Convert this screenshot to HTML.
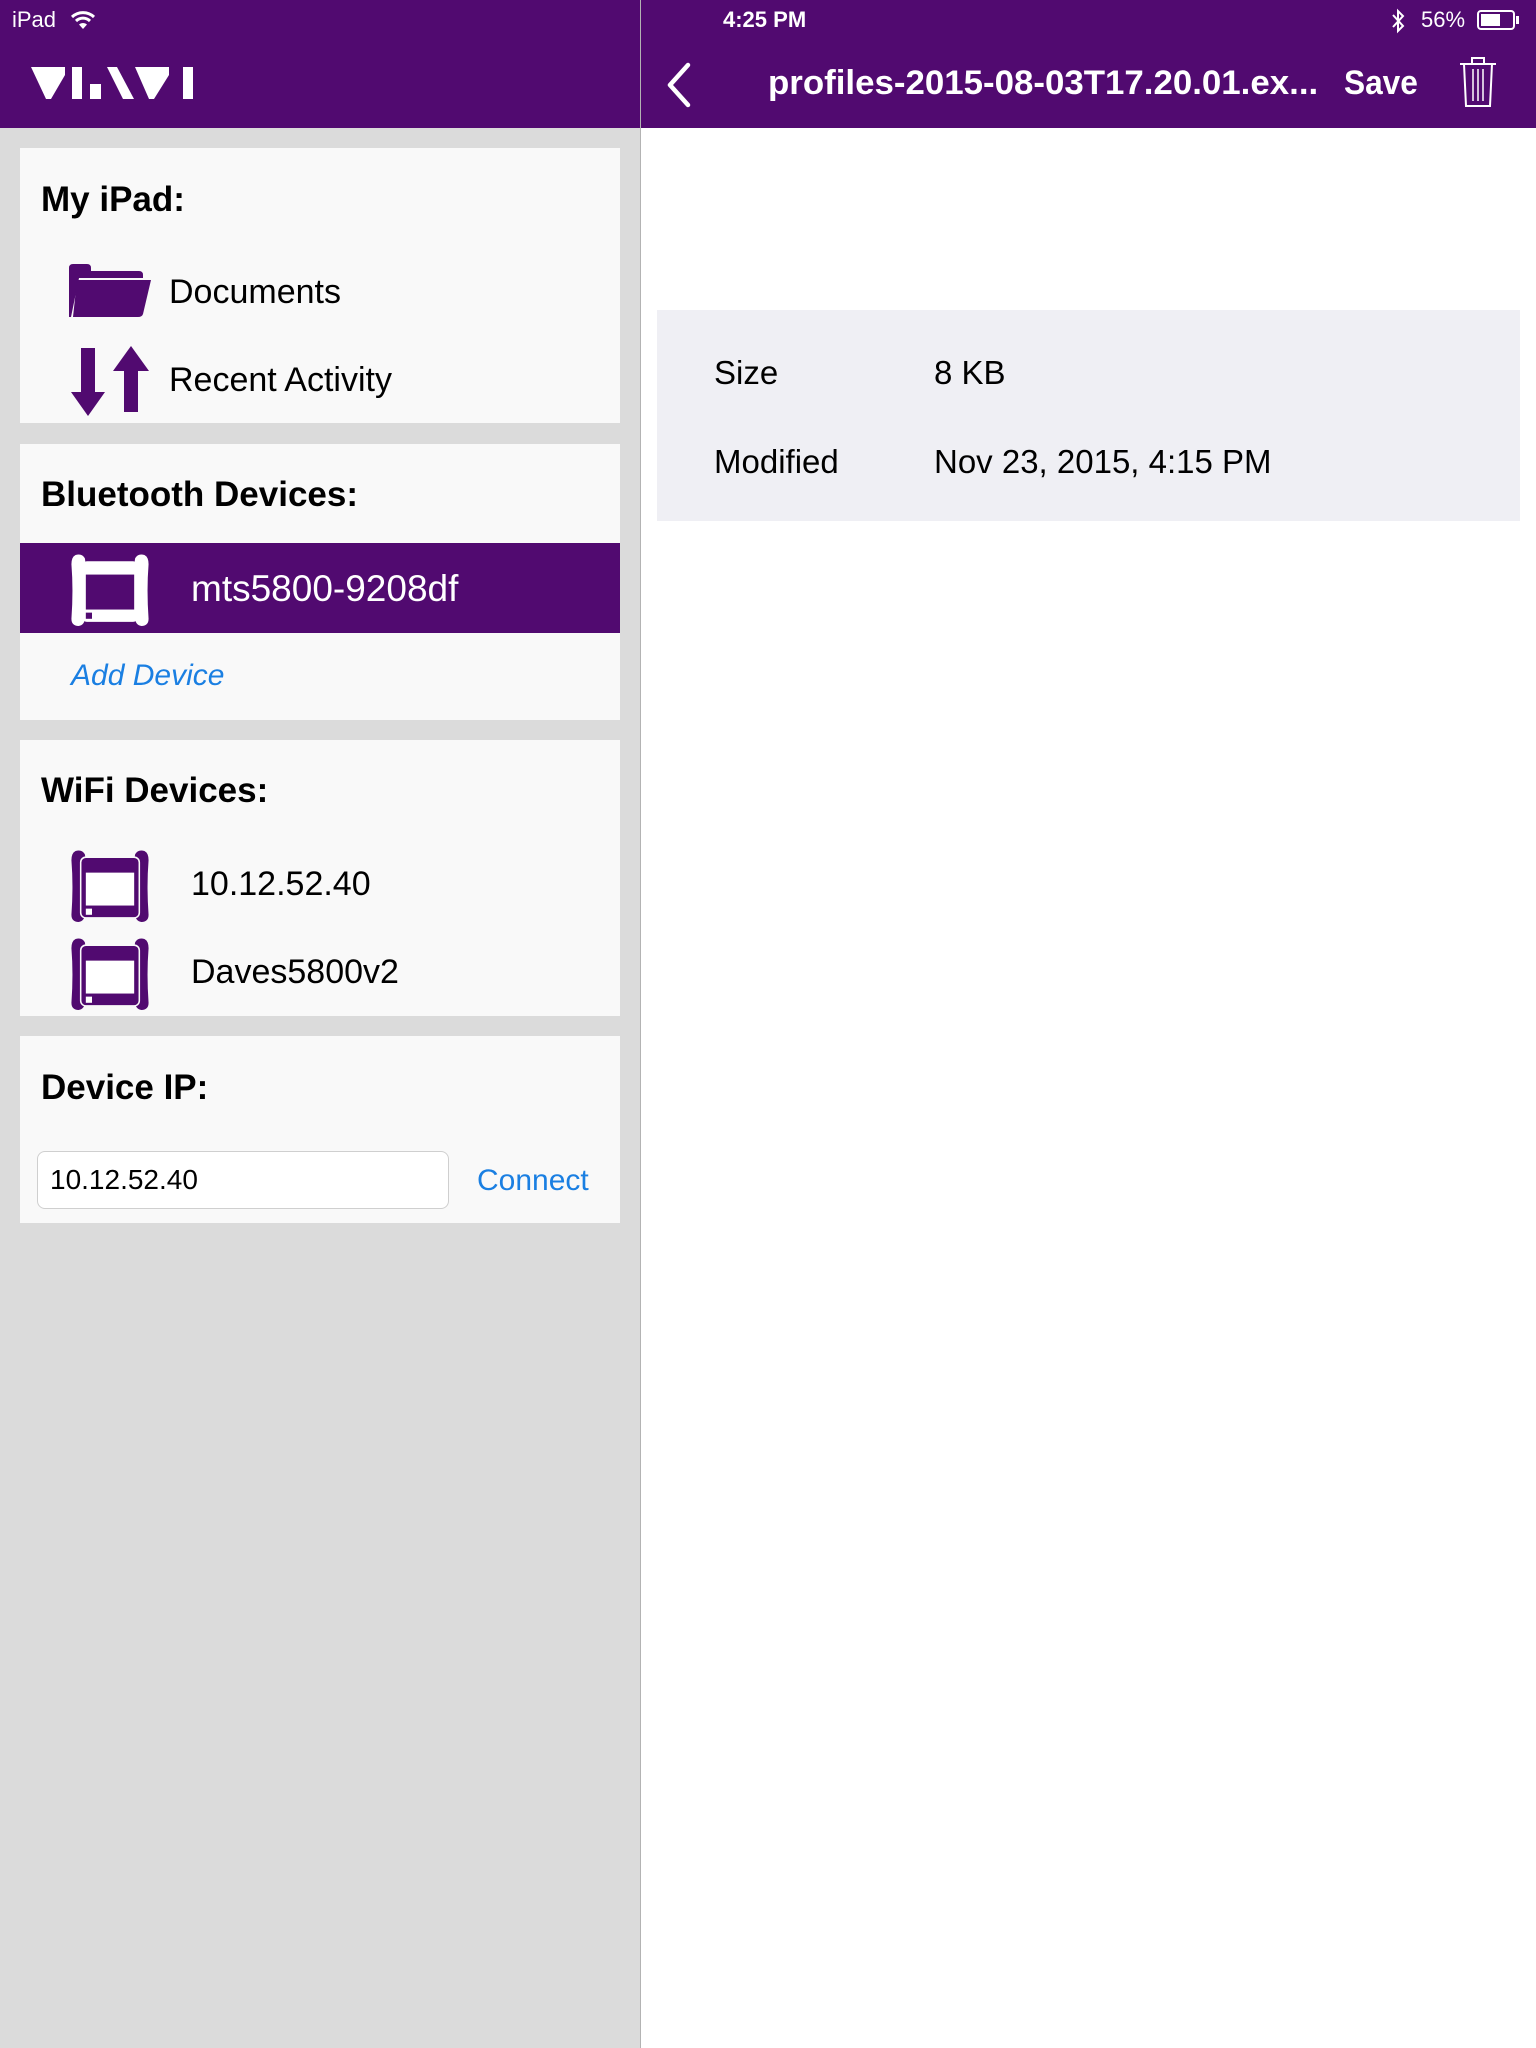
<!DOCTYPE html>
<html><head><meta charset="utf-8"><style>
*{margin:0;padding:0;box-sizing:border-box}
body{width:1536px;height:2048px;position:relative;overflow:hidden;font-family:"Liberation Sans",sans-serif;background:#fff}
.abs{position:absolute}
.t{position:absolute;white-space:nowrap;line-height:1}
#left{left:0;top:0;width:640px;height:2048px;background:#dbdbdb}
#divider{left:640px;top:0;width:1px;height:2048px;background:#b3b3b3}
.hdr{top:0;height:128px;background:#510a70}
.card{position:absolute;left:20px;width:600px;background:#f9f9f9}
.h{font-weight:bold;font-size:35px;color:#000}
.r{font-size:34px;color:#000}
.blue{color:#1a7fe2}
</style></head><body>
<div id="left" class="abs"></div>
<div class="abs hdr" style="left:0;width:640px"></div>
<div class="abs hdr" style="left:641px;width:895px"></div>
<div id="divider" class="abs"></div>

<div class="t" style="left:12px;top:9px;font-size:22px;color:#fff">iPad</div>
<svg class="abs" style="left:70px;top:9px" width="26" height="22" viewBox="0 0 26 22"><path d="M2 8 A16 16 0 0 1 24 8" stroke="#fff" stroke-width="3" fill="none"/><path d="M6 12 A10 10 0 0 1 20 12" stroke="#fff" stroke-width="3" fill="none"/><path d="M13 20 L9 15.5 A6 6 0 0 1 17 15.5 Z" fill="#fff"/></svg>
<div class="t" style="left:723px;top:9px;font-size:22px;color:#fff;font-weight:bold">4:25 PM</div>
<svg class="abs" style="left:1390px;top:7px" width="16" height="28" viewBox="0 0 16 28"><path d="M3 8 L13 19 L8 24 L8 4 L13 9 L3 20" stroke="#fff" stroke-width="2" fill="none"/></svg>
<div class="t" style="left:1421px;top:9px;font-size:22px;color:#fff">56%</div>
<div class="abs" style="left:1477px;top:10px;width:38px;height:20px;border:2px solid #fff;border-radius:4px"><div style="margin:2px;width:19px;height:12px;background:#fff"></div></div>
<div class="abs" style="left:1516px;top:16px;width:3px;height:8px;background:#fff"></div>

<svg class="abs" style="left:0;top:0" width="220" height="110" viewBox="0 0 220 110" fill="#fff">
<polygon points="31,67 65,67 65,75 51,99 46,99"/>
<rect x="72" y="67" width="10" height="32"/>
<rect x="90" y="84" width="11" height="15"/>
<polygon points="107,67 117,67 134,99 123,99"/>
<polygon points="135,67 169,67 169,75 154,99 149,99"/>
<rect x="183" y="67" width="10" height="32"/>
</svg>

<svg class="abs" style="left:664px;top:62px" width="30" height="46" viewBox="0 0 30 46"><path d="M24 3 L6 23 L24 43" stroke="#fff" stroke-width="4.5" fill="none" stroke-linecap="round" stroke-linejoin="round"/></svg>
<div class="t" style="left:768px;top:66px;font-size:34px;color:#fff;font-weight:bold;transform:scaleX(1.025);transform-origin:0 0">profiles-2015-08-03T17.20.01.ex...</div>
<div class="t" style="left:1344px;top:66px;font-size:34px;color:#fff;font-weight:bold;transform:scaleX(0.93);transform-origin:0 0">Save</div>
<svg class="abs" style="left:1457px;top:55px" width="42" height="54" viewBox="0 0 42 54" fill="none" stroke="#fff" stroke-width="2"><path d="M3 9 H39"/><path d="M15 9 V3 H27 V9"/><path d="M7 9 L9 51 H33 L35 9"/><path d="M16 14 V46 M21 14 V46 M26 14 V46" stroke-width="1.5"/></svg>

<div class="card" style="top:148px;height:275px"></div>
<div class="t h" style="left:41px;top:182px">My iPad:</div>
<svg class="abs" style="left:69px;top:264px" width="82" height="54" viewBox="0 0 82 54" fill="#510a70"><path d="M0 4 Q0 0 4 0 H18 Q22 0 22 4 V7 H70 Q74 7 74 11 V14 H10 L2 53 H0 Z"/><path d="M8 16 H82 L74 50 Q73 53 69 53 H4 Z"/></svg>
<div class="t r" style="left:169px;top:275px">Documents</div>
<svg class="abs" style="left:69px;top:346px" width="82" height="70" viewBox="0 0 82 70" fill="#510a70"><path d="M12 2 H26 V46 H36 L19 70 L2 46 H12 Z"/><path d="M55 24 H69 V66 H55 Z"/><path d="M62 0 L80 25 H44 Z"/></svg>
<div class="t r" style="left:169px;top:363px">Recent Activity</div>

<div class="card" style="top:444px;height:276px"></div>
<div class="t h" style="left:41px;top:477px">Bluetooth Devices:</div>
<div class="card" style="top:543px;height:90px;background:#510a70"></div>
<svg class="abs" style="left:69px;top:554px" width="82" height="72" viewBox="0 0 77 70">
<path d="M5 1 Q11 -1 14 4 Q15 8 14 12 Q12 35 14 62 Q14 69 8 70 Q1 70 1 63 Q3 35 1 10 Q1 3 5 1Z M72 1 Q66 -1 63 4 Q62 8 63 12 Q65 35 63 62 Q63 69 69 70 Q76 70 76 63 Q74 35 76 10 Q76 3 72 1Z" fill="#fff"/>
<rect x="11" y="7" width="55" height="59" rx="5" fill="#fff"/>
<rect x="15" y="20" width="47" height="34" fill="#510a70"/>
<rect x="15" y="57" width="6" height="6" fill="#510a70"/>
</svg>
<div class="t" style="left:191px;top:570px;font-size:37px;color:#fff">mts5800-9208df</div>
<div class="t blue" style="left:71px;top:661px;font-size:30px;font-style:italic">Add Device</div>

<div class="card" style="top:740px;height:276px"></div>
<div class="t h" style="left:41px;top:773px">WiFi Devices:</div>
<svg class="abs" style="left:69px;top:850px" width="82" height="72" viewBox="0 0 77 70">
<path d="M5 1 Q11 -1 14 4 Q15 8 14 12 Q12 35 14 62 Q14 69 8 70 Q1 70 1 63 Q3 35 1 10 Q1 3 5 1Z M72 1 Q66 -1 63 4 Q62 8 63 12 Q65 35 63 62 Q63 69 69 70 Q76 70 76 63 Q74 35 76 10 Q76 3 72 1Z" fill="#510a70"/>
<rect x="10" y="7" width="57" height="59" rx="5" fill="#510a70" stroke="#f9f9f9" stroke-width="1.5"/>
<rect x="15" y="22" width="47" height="32" fill="#fff"/>
<rect x="15" y="57" width="6" height="6" fill="#fff"/>
</svg>
<div class="t r" style="left:191px;top:867px">10.12.52.40</div>
<svg class="abs" style="left:69px;top:938px" width="82" height="72" viewBox="0 0 77 70">
<path d="M5 1 Q11 -1 14 4 Q15 8 14 12 Q12 35 14 62 Q14 69 8 70 Q1 70 1 63 Q3 35 1 10 Q1 3 5 1Z M72 1 Q66 -1 63 4 Q62 8 63 12 Q65 35 63 62 Q63 69 69 70 Q76 70 76 63 Q74 35 76 10 Q76 3 72 1Z" fill="#510a70"/>
<rect x="10" y="7" width="57" height="59" rx="5" fill="#510a70" stroke="#f9f9f9" stroke-width="1.5"/>
<rect x="15" y="22" width="47" height="32" fill="#fff"/>
<rect x="15" y="57" width="6" height="6" fill="#fff"/>
</svg>
<div class="t r" style="left:191px;top:955px">Daves5800v2</div>

<div class="card" style="top:1036px;height:187px"></div>
<div class="t h" style="left:41px;top:1070px">Device IP:</div>
<div class="abs" style="left:37px;top:1151px;width:412px;height:58px;background:#fff;border:1px solid #cfcfcf;border-radius:8px"></div>
<div class="t" style="left:50px;top:1166px;font-size:28px;color:#000">10.12.52.40</div>
<div class="t blue" style="left:477px;top:1166px;font-size:30px">Connect</div>

<div class="abs" style="left:657px;top:310px;width:863px;height:211px;background:#efeff4"></div>
<div class="t" style="left:714px;top:356px;font-size:33px;color:#000">Size</div>
<div class="t" style="left:934px;top:356px;font-size:33px;color:#000">8 KB</div>
<div class="t" style="left:714px;top:445px;font-size:33px;color:#000">Modified</div>
<div class="t" style="left:934px;top:445px;font-size:33px;color:#000">Nov 23, 2015, 4:15 PM</div>
</body></html>
